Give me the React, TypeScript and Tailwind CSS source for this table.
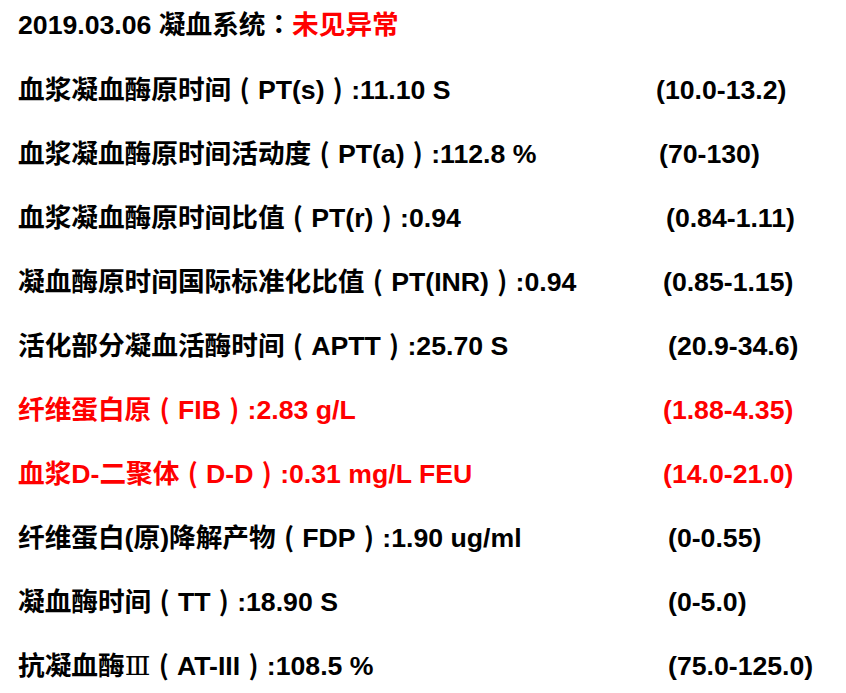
import React from "react";

function fmt(s: string): React.ReactNode {
  const parts = s.split(/([（）：])/);
  return parts.map((p, i) => {
    if (p === "（")
      return (
        <span key={i} className="inline-block w-[1em] text-center leading-none [font-family:'Noto_Sans_CJK_SC',sans-serif]">
          (
        </span>
      );
    if (p === "）")
      return (
        <span key={i} className="inline-block w-[1em] text-center leading-none [font-family:'Noto_Sans_CJK_SC',sans-serif]">
          )
        </span>
      );
    if (p === "：")
      return (
        <span key={i} className="leading-none [font-family:'Noto_Sans_CJK_TC',sans-serif]">
          ：
        </span>
      );
    return <React.Fragment key={i}>{p}</React.Fragment>;
  });
}

type Row = { label: React.ReactNode; range: string; red?: boolean; rangeClass: string };

const rows: Row[] = [
  { label: fmt("血浆凝血酶原时间（PT(s)）:11.10 S"), range: "(10.0-13.2)", rangeClass: "pl-[0px]" },
  { label: fmt("血浆凝血酶原时间活动度（PT(a)）:112.8 %"), range: "(70-130)", rangeClass: "pl-[3px]" },
  { label: fmt("血浆凝血酶原时间比值（PT(r)）:0.94"), range: "(0.84-1.11)", rangeClass: "pl-[10px]" },
  { label: fmt("凝血酶原时间国际标准化比值（PT(INR)）:0.94"), range: "(0.85-1.15)", rangeClass: "pl-[7px]" },
  { label: fmt("活化部分凝血活酶时间（APTT）:25.70 S"), range: "(20.9-34.6)", rangeClass: "pl-[12px]" },
  { label: fmt("纤维蛋白原（FIB）:2.83 g/L"), range: "(1.88-4.35)", red: true, rangeClass: "pl-[7px]" },
  { label: fmt("血浆D-二聚体（D-D）:0.31 mg/L FEU"), range: "(14.0-21.0)", red: true, rangeClass: "pl-[7px]" },
  { label: fmt("纤维蛋白(原)降解产物（FDP）:1.90 ug/ml"), range: "(0-0.55)", rangeClass: "pl-[12px]" },
  { label: fmt("凝血酶时间（TT）:18.90 S"), range: "(0-5.0)", rangeClass: "pl-[12px]" },
  {
    label: (
      <>
        抗凝血酶
        <span className="font-normal [font-family:'DejaVu_Serif','Liberation_Serif',serif]">Ⅲ</span>
        {fmt("（AT-III）:108.5 %")}
      </>
    ),
    range: "(75.0-125.0)",
    rangeClass: "pl-[12px]",
  },
];

export default function App() {
  return (
    <div className="w-[846px] h-[693px] bg-white overflow-hidden pl-[18px] font-bold text-[26.67px] text-black [font-family:'Liberation_Sans','Noto_Sans_CJK_SC',sans-serif]">
      <div className="leading-[50px] whitespace-nowrap">
        2019.03.06 凝血系统{fmt("：")}<span className="text-[#ff0000]">未见异常</span>
      </div>
      <div className="mt-[8px] flex flex-col">
        {rows.map((r, i) => (
          <div
            key={i}
            className={`flex leading-[64px] whitespace-nowrap ${r.red ? "text-[#ff0000]" : "text-black"}`}
          >
            <div className="w-[638px] shrink-0">{r.label}</div>
            <div className={r.rangeClass}>{r.range}</div>
          </div>
        ))}
      </div>
    </div>
  );
}
